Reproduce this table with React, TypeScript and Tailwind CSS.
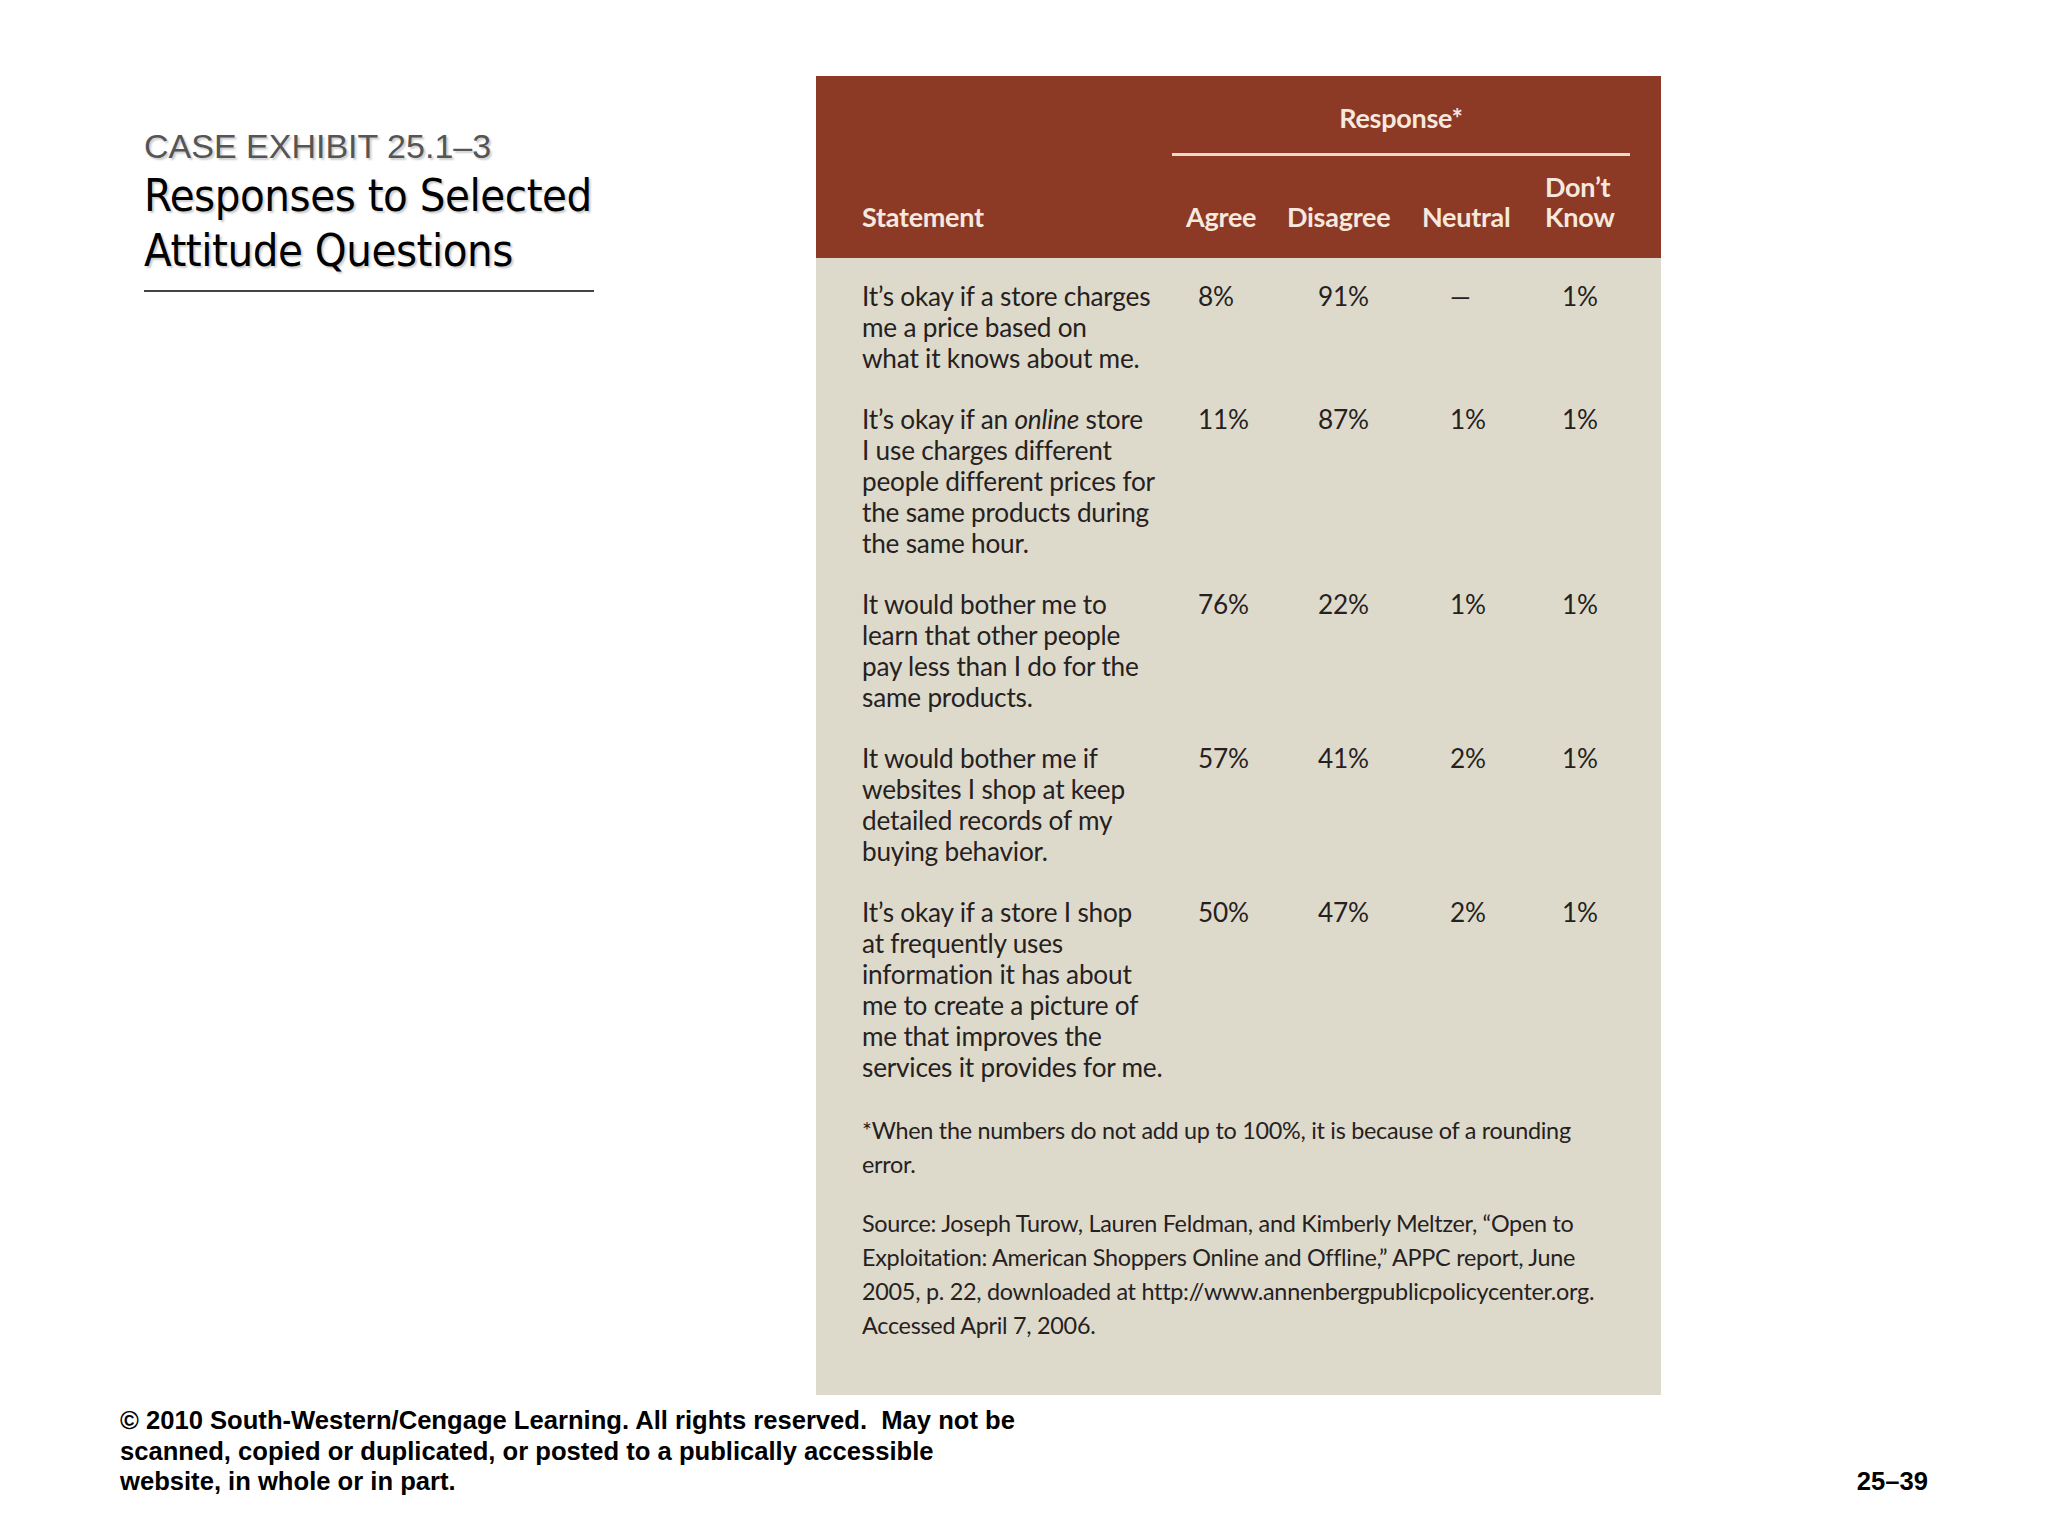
const rows: { text: React.ReactNode; agree: string; disagree: string; neutral: string; dk: string }[] = [
  {
    text: (
      <>
        It’s okay if a store charges
        <br />
        me a price based on
        <br />
        what it knows about me.
      </>
    ),
    agree: '8%',
    disagree: '91%',
    neutral: '—',
    dk: '1%',
  },
  {
    text: (
      <>
        It’s okay if an <em>online</em> store
        <br />I use charges different
        <br />
        people different prices for
        <br />
        the same products during
        <br />
        the same hour.
      </>
    ),
    agree: '11%',
    disagree: '87%',
    neutral: '1%',
    dk: '1%',
  },
  {
    text: (
      <>
        It would bother me to
        <br />
        learn that other people
        <br />
        pay less than I do for the
        <br />
        same products.
      </>
    ),
    agree: '76%',
    disagree: '22%',
    neutral: '1%',
    dk: '1%',
  },
  {
    text: (
      <>
        It would bother me if
        <br />
        websites I shop at keep
        <br />
        detailed records of my
        <br />
        buying behavior.
      </>
    ),
    agree: '57%',
    disagree: '41%',
    neutral: '2%',
    dk: '1%',
  },
  {
    text: (
      <>
        It’s okay if a store I shop
        <br />
        at frequently uses
        <br />
        information it has about
        <br />
        me to create a picture of
        <br />
        me that improves the
        <br />
        services it provides for me.
      </>
    ),
    agree: '50%',
    disagree: '47%',
    neutral: '2%',
    dk: '1%',
  },
];

const grid = 'grid grid-cols-[318px_100px_136px_124px_100px]';

export default function App() {
  return (
    <div className="relative w-[2048px] h-[1536px] bg-white font-['Liberation_Sans',Arial,sans-serif]">
      <div className="flex pt-[76px]">
        {/* title block */}
        <div className="ml-[144px] w-[450px] pt-[50px]">
          <div className="text-[34px] leading-[40px] text-[#555] [text-shadow:2px_2px_2px_rgba(0,0,0,0.2)]">
            CASE EXHIBIT 25.1–3
          </div>
          <div className="mt-[2px] font-['DejaVu_Sans_Condensed','DejaVu_Sans',sans-serif] text-[45px] leading-[55px] text-black tracking-[-0.01em] [text-shadow:2px_2px_2px_rgba(0,0,0,0.2)]">
            Responses to Selected
            <br />
            Attitude Questions
          </div>
          <div className="mt-[12px] h-[2px] bg-[#444]" />
        </div>

        {/* exhibit table */}
        <div className="ml-[222px] w-[845px] bg-[#dddacb] font-['Lato',sans-serif] text-[#26211f]">
          <div className="bg-[#8c3925] pl-[46px] pt-[27px] pb-[26px] text-[#f6e8de] font-bold text-[27px] leading-[30px] tracking-[-0.01em]">
            <div className={grid}>
              <div />
              <div className="col-span-4 -ml-[8px] w-[458px] border-b-[3px] border-[#ecd9cc] pb-[20px] text-center">
                Response*
              </div>
            </div>
            <div className={`${grid} mt-[16px] items-end`}>
              <div>Statement</div>
              <div className="pl-[6px]">Agree</div>
              <div className="pl-[7px]">Disagree</div>
              <div className="pl-[6px]">Neutral</div>
              <div className="pl-[5px]">
                Don’t
                <br />
                Know
              </div>
            </div>
          </div>

          <div className="pl-[46px] pt-[23px] pr-[30px] pb-[53px]">
            <div className="flex flex-col gap-[30px] text-[26.2px] leading-[31px] tracking-[-0.008em]">
              {rows.map((r, i) => (
                <div key={i} className={grid}>
                  <div className="whitespace-nowrap">{r.text}</div>
                  <div className="pl-[18px]">{r.agree}</div>
                  <div className="pl-[38px]">{r.disagree}</div>
                  <div className="pl-[34px]">{r.neutral}</div>
                  <div className="pl-[22px]">{r.dk}</div>
                </div>
              ))}
            </div>

            <p className="mt-[30px] whitespace-nowrap text-[23.4px] leading-[34px] tracking-[-0.012em]">
              *When the numbers do not add up to 100%, it is because of a rounding
              <br />
              error.
            </p>
            <p className="mt-[25px] whitespace-nowrap text-[23.4px] leading-[34px] tracking-[-0.012em]">
              Source: Joseph Turow, Lauren Feldman, and Kimberly Meltzer, “Open to
              <br />
              Exploitation: American Shoppers Online and Offline,” APPC report, June
              <br />
              2005, p. 22, downloaded at http://www.annenbergpublicpolicycenter.org.
              <br />
              Accessed April 7, 2006.
            </p>
          </div>
        </div>
      </div>

      {/* footer */}
      <div className="flex items-end justify-between pl-[120px] pr-[120px] mt-[10px] font-bold text-[25.6px] leading-[30.5px] text-black">
        <div>
          © 2010 South-Western/Cengage Learning. All rights reserved.&nbsp; May not be
          <br />
          scanned, copied or duplicated, or posted to a publically accessible
          <br />
          website, in whole or in part.
        </div>
        <div>25–39</div>
      </div>
    </div>
  );
}
